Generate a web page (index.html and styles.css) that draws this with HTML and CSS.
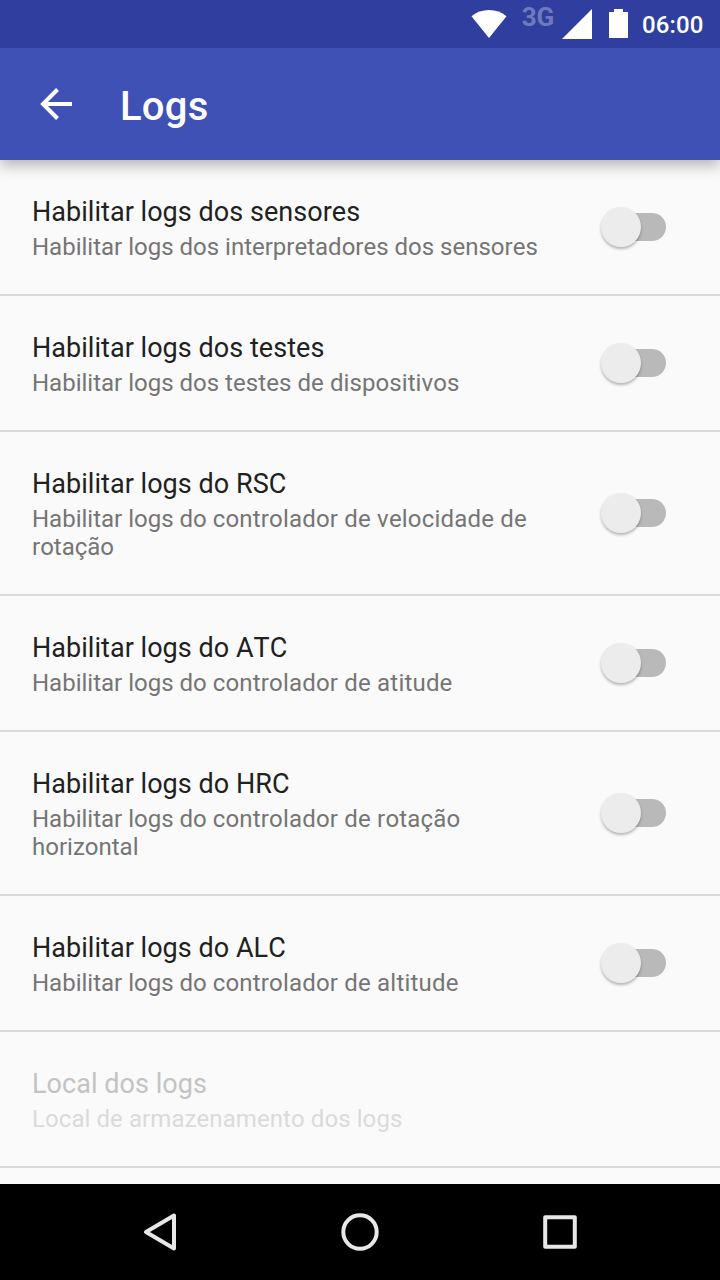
FILE: index.html
```html
<!DOCTYPE html>
<html lang="pt">
<head>
<meta charset="utf-8">
<title>Logs</title>
<link rel="stylesheet" href="styles.css">
</head>
<body>
<div class="screen">
  <div class="status">
    <svg class="status-icons" width="172" height="48" viewBox="0 0 172 48">
      <path d="M11.500 16.300Q19 10 29 10T46.500 16.300L29 38Z" fill="#fff"/>
      <text class="network" x="61.700" y="26">3G</text>
      <path d="M102 39L132 9V39Z" fill="#fff"/>
      <path d="M149 12H154V9H163V12H168V38H149Z" fill="#fff"/>
    </svg>
    <span class="clock">06:00</span>
  </div>
  <header class="toolbar">
    <svg class="back" width="32" height="32" viewBox="0 0 32 32"><path d="M32 16H3M17.500 1.500L3 16L17.500 30.500" fill="none" stroke="#fff" stroke-width="4"/></svg>
    <h1 class="heading">Logs</h1>
  </header>
  <main class="list">
    <div class="row"><div class="copy"><div class="title">Habilitar logs dos sensores</div><div class="summary">Habilitar logs dos interpretadores dos sensores</div></div><div class="switch"></div></div>
    <div class="row"><div class="copy"><div class="title">Habilitar logs dos testes</div><div class="summary">Habilitar logs dos <span class="loose">testes de dispositivos</span></div></div><div class="switch"></div></div>
    <div class="row"><div class="copy"><div class="title">Habilitar logs do RSC</div><div class="summary">Habilitar logs do <span class="wide">controlador de velocidade de</span> rotação</div></div><div class="switch"></div></div>
    <div class="row"><div class="copy"><div class="title">Habilitar logs do ATC</div><div class="summary">Habilitar logs do <span class="wide">controlador de atitude</span></div></div><div class="switch"></div></div>
    <div class="row"><div class="copy"><div class="title">Habilitar logs do HRC</div><div class="summary">Habilitar logs do <span class="wide">controlador de rotação</span> horizontal</div></div><div class="switch"></div></div>
    <div class="row"><div class="copy"><div class="title">Habilitar logs do ALC</div><div class="summary">Habilitar logs do <span class="wide">controlador de altitude</span></div></div><div class="switch"></div></div>
    <div class="row disabled"><div class="copy"><div class="title">Local dos logs</div><div class="summary loose">Local de armazenamento dos logs</div></div></div>
  </main>
  <nav class="navbar">
    <svg width="720" height="96" viewBox="0 0 720 96" fill="none" stroke="#e8e8e8" stroke-width="4" stroke-linejoin="round">
      <path d="M174 31.500V64.500L146 48Z"/><circle cx="360" cy="48" r="16.700"/><rect x="545.200" y="33.200" width="29.600" height="29.600"/>
    </svg>
  </nav>
</div>
</body>
</html>
```
FILE: styles.css
```css
body { margin: 0; font-family: Roboto, sans-serif; font-kerning: none; }
.screen { width: 720px; height: 1280px; display: flex; flex-direction: column; overflow: hidden; background: #fafafa; }
.status { position: relative; z-index: 2; height: 48px; flex: none; display: flex; align-items: center; background: #303f9f; padding-left: 460px; }
.status-icons { flex: none; }
.network { font-size: 26px; font-weight: 700; fill: #6f7abc; }
.clock { font-size: 24px; font-weight: 500; color: #fff; margin: 2px 0 0 10px; line-height: 48px; letter-spacing: .1px; }
.toolbar { height: 112px; flex: none; display: flex; align-items: center; background: #3f51b5; padding-left: 40px; z-index: 1; box-shadow: 0 5px 14px rgba(0,0,0,.3); }
.heading { margin: 5px 0 0 48px; font-size: 40px; font-weight: 500; color: #fff; letter-spacing: .25px; }
.list { flex: 1; min-height: 0; overflow: hidden; }
.row { display: flex; align-items: center; box-sizing: border-box; padding: 34px 52px 32px 32px; border-bottom: 2px solid #dadada; }
.copy { width: 512px; }
.title { font-size: 27px; line-height: 36px; color: #212121; letter-spacing: .04px; }
.summary { font-size: 24px; line-height: 28px; padding: 3px 0 1px; color: #757575; }
.loose { letter-spacing: .08px; }
.wide { letter-spacing: .19px; }
.disabled .title { color: #c3c3c3; }
.disabled .summary { color: #dadada; }
.switch { position: relative; width: 66px; height: 28px; margin: 0 0 2px 56px; }
.switch::before { content: ""; position: absolute; inset: 0 0 0 8px; border-radius: 14px; background: #b9b9b9; }
.switch::after { content: ""; position: absolute; left: 1px; top: -6px; width: 40px; height: 40px; border-radius: 50%; background: #ececec; box-shadow: 0 2px 3px rgba(0,0,0,.28); }
.navbar { height: 96px; flex: none; background: #000; }
```
